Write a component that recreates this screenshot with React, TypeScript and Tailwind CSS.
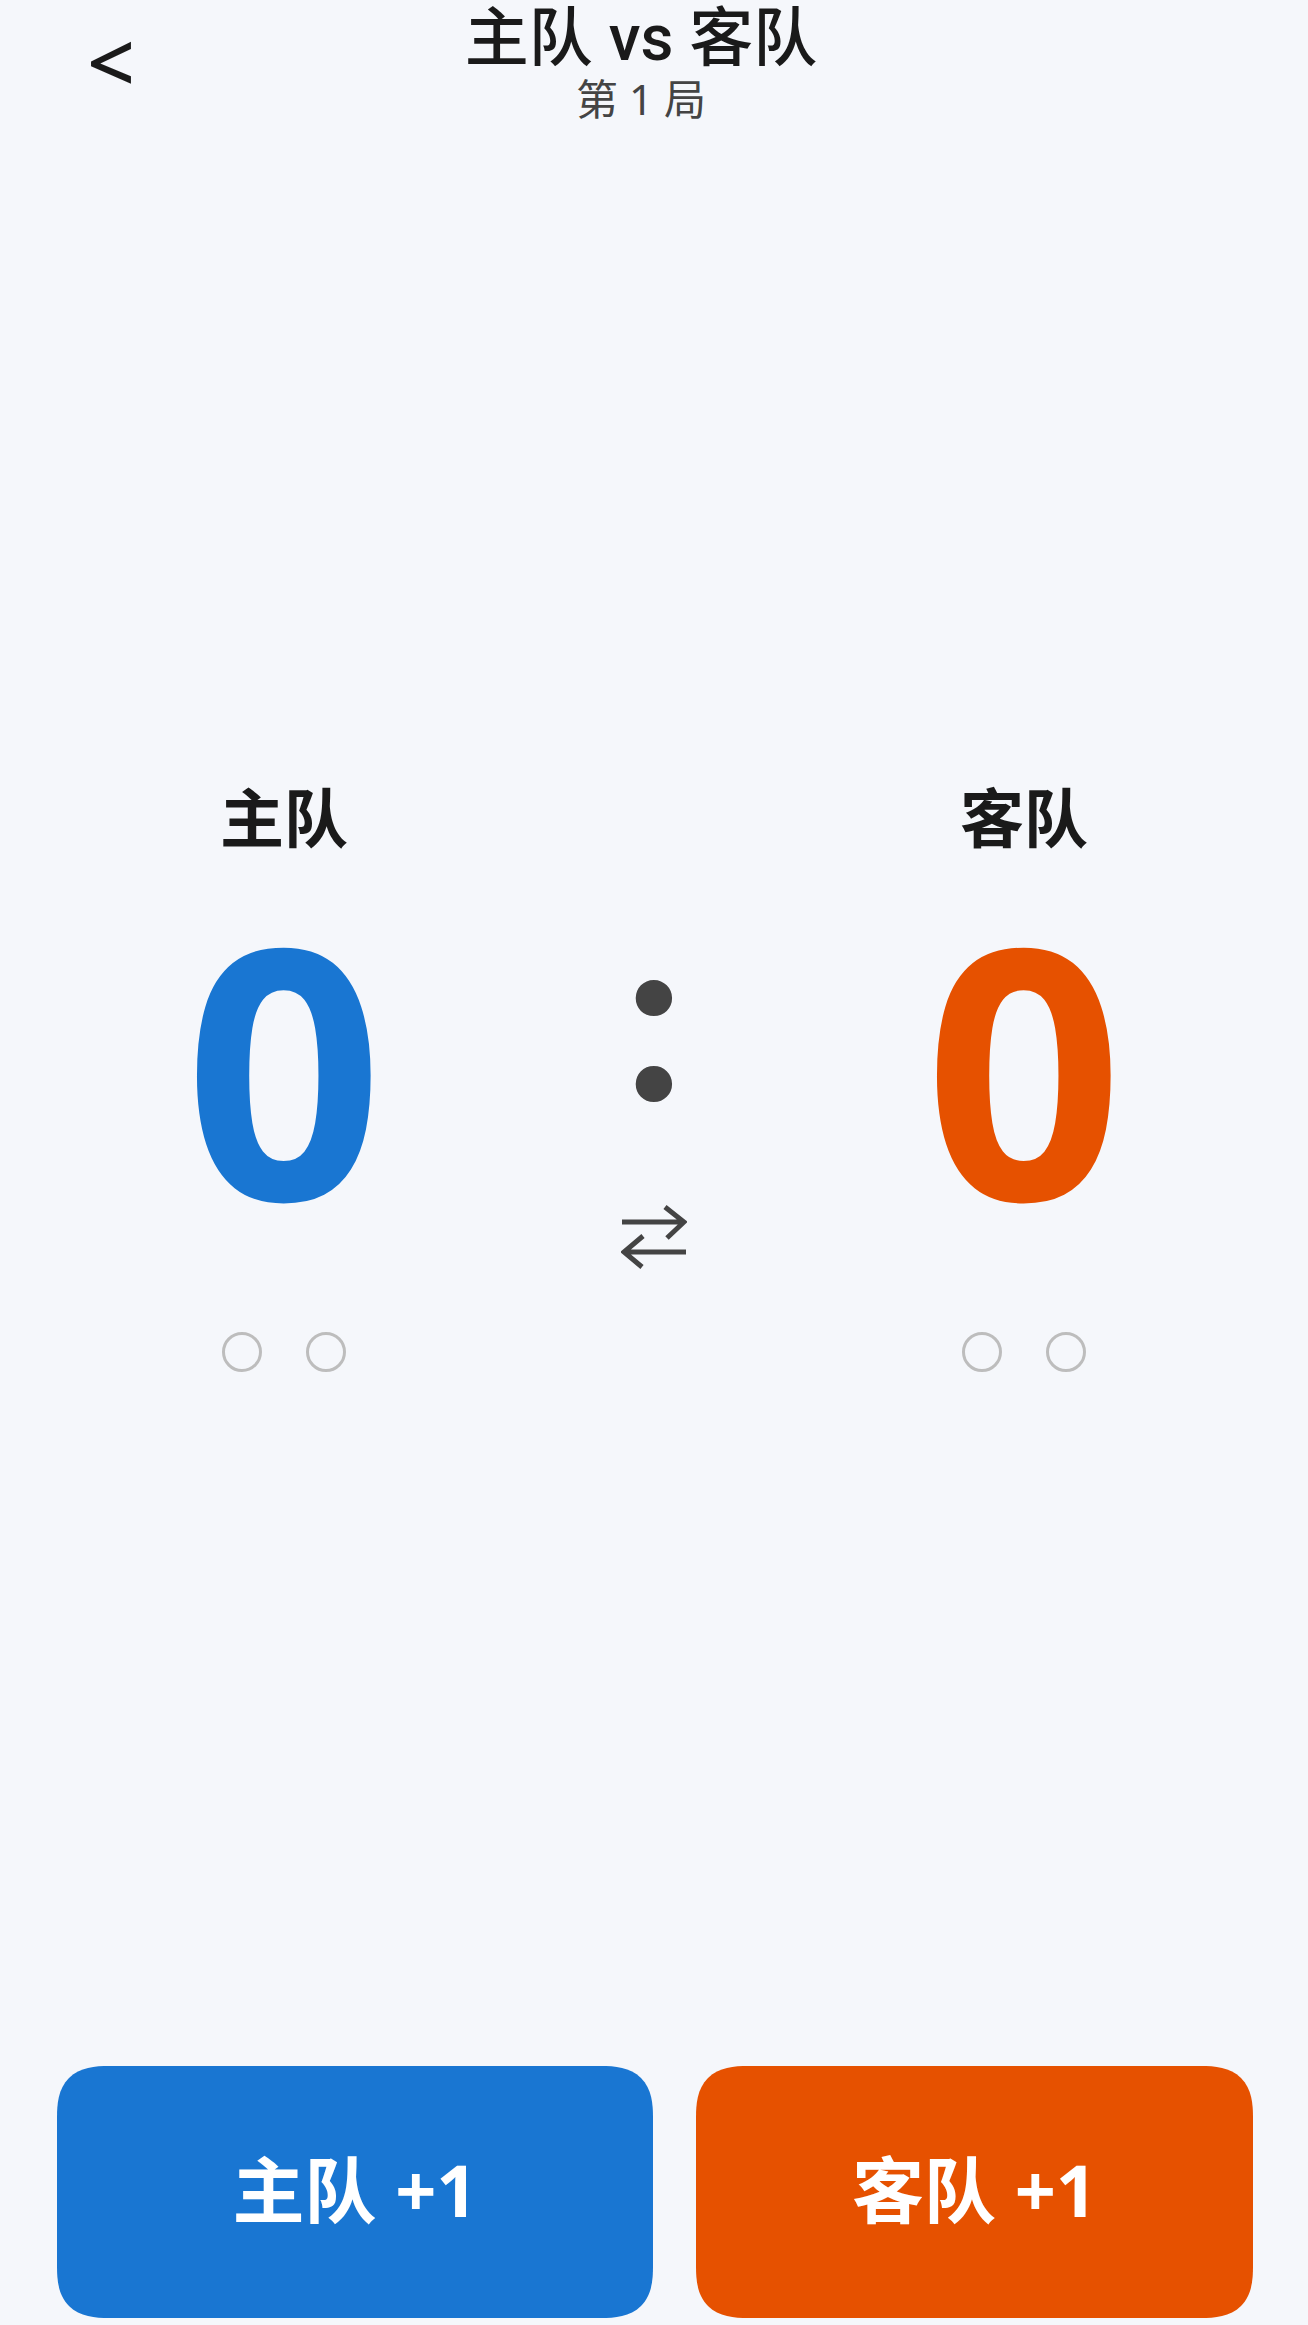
const FONT = "font-['Noto_Sans','Noto_Sans_CJK_SC',sans-serif]";

function TeamColumn({ name, color }: { name: string; color: string }) {
  return (
    <div className="flex flex-col items-center">
      <div className="text-[64px] leading-[80px] font-bold text-[#1a1a1a]">{name}</div>
      <div className={`mt-[17px] h-[380px] text-[348px] leading-[380px] font-bold ${color}`}>0</div>
      <div className="mt-[77px] flex gap-[44px]">
        <span className="h-[40px] w-[40px] rounded-full border-[3px] border-[#bdbdbd]" />
        <span className="h-[40px] w-[40px] rounded-full border-[3px] border-[#bdbdbd]" />
      </div>
    </div>
  );
}

export default function App() {
  return (
    <div className={`flex h-[2325px] w-[1308px] flex-col bg-[#f5f7fb] ${FONT}`}>
      <header className="relative h-[124px]">
        <button className="absolute left-[87px] top-[11px] text-[84px] leading-[100px] font-medium text-[#1a1a1a]">&lt;</button>
        <div className="flex flex-col items-center pt-[4px] pr-[26px]">
          <div className="font-['Roboto','Noto_Sans_CJK_SC',sans-serif] text-[64px] leading-[70px] font-medium whitespace-pre text-[#1a1a1a]">主队 vs 客队</div>
          <div className="text-[42px] leading-[50px] text-[#444444]">第 1 局</div>
        </div>
      </header>

      <main className="mx-auto mt-[654px] grid w-[1110px] grid-cols-3">
        <TeamColumn name="主队" color="text-[#1976d2]" />
        <div className="flex flex-col items-center pt-[79px]">
          <div className="h-[300px] font-['Lato'] text-[240px] leading-[300px] font-bold text-[#444444]">:</div>
          <svg className="mt-[48px]" width="66" height="64" viewBox="0 0 66 64" fill="none" stroke="#444444" strokeWidth="5">
            <path d="M1 17H63M44 2L63 17L46 33" />
            <path d="M65 47H3M22 31L3 47L21 62" />
          </svg>
        </div>
        <TeamColumn name="客队" color="text-[#e65100]" />
      </main>

      <div className="mt-auto mb-[7px] flex gap-[43px] pl-[57px]">
        <button className="flex h-[252px] w-[596px] items-center justify-center rounded-[52px] bg-[#1976d2] pb-[6px] text-[72px] font-bold text-white [corner-shape:superellipse(1.4)]">主队 +1</button>
        <button className="flex h-[252px] w-[557px] items-center justify-center rounded-[52px] bg-[#e65100] pb-[6px] text-[72px] font-bold text-white [corner-shape:superellipse(1.4)]">客队 +1</button>
      </div>
    </div>
  );
}
